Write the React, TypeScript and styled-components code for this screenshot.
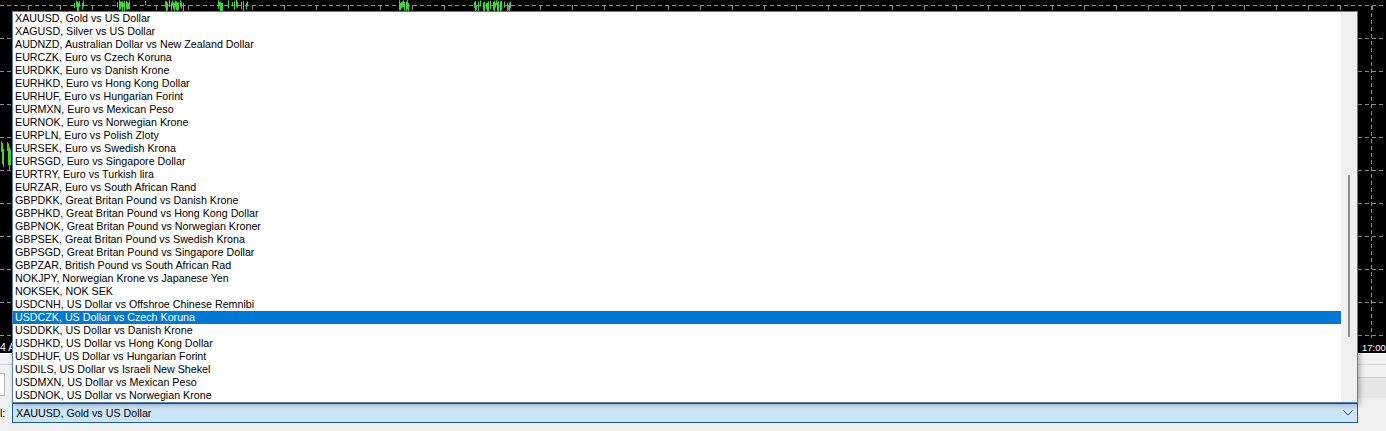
import React from "react";
import styled, { createGlobalStyle } from "styled-components";

const GlobalStyle = createGlobalStyle`
  html, body { margin: 0; padding: 0; background: #f0f0f0; }
  #root { width: 1386px; height: 431px; overflow: hidden; }
`;

const items = [
  "XAUUSD, Gold vs US Dollar",
  "XAGUSD, Silver vs US Dollar",
  "AUDNZD, Australian Dollar vs New Zealand Dollar",
  "EURCZK, Euro vs Czech Koruna",
  "EURDKK, Euro vs Danish Krone",
  "EURHKD, Euro vs Hong Kong Dollar",
  "EURHUF, Euro vs Hungarian Forint",
  "EURMXN, Euro vs Mexican Peso",
  "EURNOK, Euro vs Norwegian Krone",
  "EURPLN, Euro vs Polish Zloty",
  "EURSEK, Euro vs Swedish Krona",
  "EURSGD, Euro vs Singapore Dollar",
  "EURTRY, Euro vs Turkish lira",
  "EURZAR, Euro vs South African Rand",
  "GBPDKK, Great Britan Pound vs Danish Krone",
  "GBPHKD, Great Britan Pound vs Hong Kong Dollar",
  "GBPNOK, Great Britan Pound vs Norwegian Kroner",
  "GBPSEK, Great Britan Pound vs Swedish Krona",
  "GBPSGD, Great Britan Pound vs Singapore Dollar",
  "GBPZAR, British Pound vs South African Rad",
  "NOKJPY, Norwegian Krone vs Japanese Yen",
  "NOKSEK, NOK SEK",
  "USDCNH, US Dollar vs Offshroe Chinese Remnibi",
  "USDCZK, US Dollar vs Czech Koruna",
  "USDDKK, US Dollar vs Danish Krone",
  "USDHKD, US Dollar vs Hong Kong Dollar",
  "USDHUF, US Dollar vs Hungarian Forint",
  "USDILS, US Dollar vs Israeli New Shekel",
  "USDMXN, US Dollar vs Mexican Peso",
  "USDNOK, US Dollar vs Norwegian Krone",
];

const Screen = styled.div`
  position: relative;
  width: 1386px;
  height: 431px;
  overflow: hidden;
  display: flex;
  flex-direction: column;
  font-family: "Liberation Sans", Arial, sans-serif;
  font-size: 10.7px;
  color: #000;
`;

const Chart = styled.div`
  flex: none;
  height: 353px;
  background: #000;
  & > svg { display: block; }
`;

const Panel = styled.div`
  flex: 1;
  background: #f0f0f0;
  display: flex;
  flex-direction: column;
`;

const TopStrip = styled.div`
  height: 12px;
  border-top: 1px solid #ffffff;
  border-bottom: 1px solid #d4d4d4;
  box-sizing: border-box;
`;

const ToolRow = styled.div`
  margin-top: 8px;
  height: 23px;
  display: flex;
  justify-content: space-between;
  align-items: stretch;
`;

const StubInput = styled.div`
  width: 5px;
  background: #fff;
  border: 1px solid #b5b5b5;
  border-left: none;
  box-sizing: border-box;
`;

const StubBox = styled.div`
  width: 29px;
  margin-top: 4px;
  height: 21px;
  background: #e6e6e6;
  border-top: 1px solid #d0d0d0;
  box-sizing: border-box;
`;

const ComboRow = styled.div`
  margin-top: 7px;
  height: 20px;
  display: flex;
  align-items: stretch;
`;

const Label = styled.div`
  width: 12px;
  display: flex;
  align-items: center;
`;

const Combo = styled.div`
  width: 1346px;
  box-sizing: border-box;
  background: #cce4f7;
  border: 1px solid #1b5e9c;
  display: flex;
  align-items: center;
  justify-content: space-between;
  padding: 0 4px 0 3px;
`;

const DropList = styled.div`
  position: absolute;
  left: 12px;
  top: 11px;
  width: 1346px;
  height: 392px;
  box-sizing: border-box;
  background: #fff;
  border: 1px solid #4f7fb0;
  box-shadow: 2px 2px 5px rgba(0, 0, 0, 0.28);
  display: flex;
`;

const Rows = styled.div`
  flex: 1;
  display: flex;
  flex-direction: column;
`;

const Row = styled.div<{ $selected?: boolean }>`
  height: 13px;
  line-height: 13px;
  padding-left: 2px;
  white-space: nowrap;
  background: ${(p) => (p.$selected ? "#0078d7" : "transparent")};
  color: ${(p) => (p.$selected ? "#fff" : "#000")};
`;

const ScrollTrack = styled.div`
  width: 16px;
  background: #f0f0f0;
  display: flex;
  justify-content: center;
  padding-top: 163px;
  box-sizing: border-box;
`;

const Thumb = styled.div`
  width: 2px;
  height: 162px;
  background: #8b8b8b;
  border-radius: 1px;
`;

function seeded(n: number) {
  const x = Math.sin(n * 12.9898) * 43758.5453;
  return x - Math.floor(x);
}

const greenRanges: [number, number][] = [
  [74, 83],
  [117, 129],
  [143, 146],
  [164, 186],
  [217, 249],
  [398, 408],
  [474, 510],
];

function ChartDrawing() {
  const hLines: number[] = [];
  for (let y = 38; y <= 336; y += 33) hLines.push(y);
  const ticks: number[] = [];
  for (let x = 28; x < 1386; x += 32) ticks.push(x);
  const bars: React.ReactNode[] = [];
  let k = 0;
  greenRanges.forEach(([a, b]) => {
    for (let x = a; x <= b; x += 1) {
      k++;
      const r = seeded(k);
      if (r < 0.35) continue;
      const y1 = seeded(k + 100) * 3;
      const h = 4 + seeded(k + 200) * 7;
      bars.push(<line key={`g${k}`} x1={x + 0.5} x2={x + 0.5} y1={y1} y2={y1 + h} stroke="#3ad83a" strokeWidth={1} />);
    }
  });
  for (let i = 0; i < 10; i++) {
    const x = 1 + i;
    if (seeded(i + 500) < 0.3) continue;
    const y1 = 140 + seeded(i + 300) * 10;
    const h = 8 + seeded(i + 400) * 18;
    bars.push(<line key={`l${i}`} x1={x + 0.5} x2={x + 0.5} y1={y1} y2={y1 + h} stroke="#3ad83a" strokeWidth={1} />);
  }
  return (
    <svg width={1386} height={353} viewBox="0 0 1386 353">
      <line x1={0} x2={1386} y1={5.5} y2={5.5} stroke="#8c8c8c" strokeDasharray="4 3" />
      {ticks.map((x) => (
        <line key={`t${x}`} x1={x + 0.5} x2={x + 0.5} y1={5} y2={10} stroke="#8c8c8c" />
      ))}
      {hLines.map((y) => (
        <line key={`h${y}`} x1={0} x2={1386} y1={y + 0.5} y2={y + 0.5} stroke="#8c8c8c" strokeDasharray="4 3" />
      ))}
      <line x1={1371.5} x2={1371.5} y1={6} y2={338} stroke="#8c8c8c" strokeDasharray="4 3" />
      {bars}
      <text x={0} y={351} fill="#fff" fontSize={10.5} fontFamily="Liberation Sans, Arial, sans-serif">4 A</text>
      <text x={1362} y={351} fill="#fff" fontSize={9.5} fontFamily="Liberation Sans, Arial, sans-serif">17:00</text>
    </svg>
  );
}

function Chevron() {
  return (
    <svg width="10" height="6" viewBox="0 0 10 6">
      <path d="M0.5 0.5 L5 5 L9.5 0.5" fill="none" stroke="#444" strokeWidth="1" />
    </svg>
  );
}

export default function App() {
  return (
    <>
      <GlobalStyle />
      <Screen>
        <Chart>
          <ChartDrawing />
        </Chart>
        <Panel>
          <TopStrip />
          <ToolRow>
            <StubInput />
            <StubBox />
          </ToolRow>
          <ComboRow>
            <Label>l:</Label>
            <Combo>
              <span>XAUUSD, Gold vs US Dollar</span>
              <Chevron />
            </Combo>
          </ComboRow>
        </Panel>
        <DropList>
          <Rows>
            {items.map((t, i) => (
              <Row key={t} $selected={i === 23}>
                {t}
              </Row>
            ))}
          </Rows>
          <ScrollTrack>
            <Thumb />
          </ScrollTrack>
        </DropList>
      </Screen>
    </>
  );
}
